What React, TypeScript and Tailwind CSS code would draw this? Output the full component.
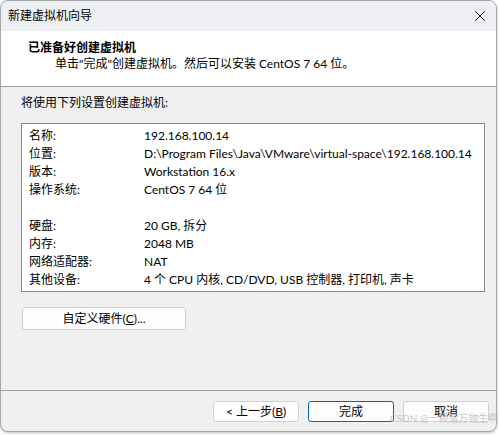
import React from "react";

const font = { fontFamily: 'Lato, "Noto Sans CJK SC", "Noto Sans", sans-serif' };

const rows1: [string, string][] = [
  ["名称:", "192.168.100.14"],
  ["位置:", "D:\\Program Files\\Java\\VMware\\virtual-space\\192.168.100.14"],
  ["版本:", "Workstation 16.x"],
  ["操作系统:", "CentOS 7 64 位"],
];
const rows2: [string, string][] = [
  ["硬盘:", "20 GB, 拆分"],
  ["内存:", "2048 MB"],
  ["网络适配器:", "NAT"],
  ["其他设备:", "4 个 CPU 内核, CD/DVD, USB 控制器, 打印机, 声卡"],
];

function Row({ k, v }: { k: string; v: string }) {
  return (
    <div className="flex h-[18px] items-center">
      <div className="w-[115px] shrink-0">{k}</div>
      <div className="whitespace-nowrap">{v}</div>
    </div>
  );
}

export default function App() {
  return (
    <div className="w-[499px] h-[435px] bg-white relative text-[12px] text-black leading-none" style={font}>
      <div className="w-[497px] h-[432px] flex flex-col rounded-[8px] border border-[#a8a8a8] overflow-hidden bg-[#f0f0f0] shadow-[0_1px_3px_rgba(0,0,0,0.25)]">
        {/* title bar */}
        <div className="h-[30px] shrink-0 bg-[#eef0f4] flex items-center justify-between pl-[7px] pr-[9px]">
          <span className="text-[12px]">新建虚拟机向导</span>
          <svg width="12" height="12" viewBox="0 0 12 12" className="mr-[1px]">
            <path d="M1 1 L11 11 M11 1 L1 11" stroke="#1a1a1a" strokeWidth="1" />
          </svg>
        </div>
        {/* header */}
        <div className="h-[56px] shrink-0 bg-white border-b border-[#a0a0a0] flex flex-col pl-[27px] pt-[9px]">
          <div className="font-bold h-[16px] flex items-center">已准备好创建虚拟机</div>
          <div className="pl-[27px] h-[16px] flex items-center">单击"完成"创建虚拟机。然后可以安装 CentOS 7 64 位。</div>
        </div>
        {/* body */}
        <div className="flex-1 flex flex-col pl-[20px] pr-[11px]">
          <div className="h-[16px] mt-[8px] flex items-center">将使用下列设置创建虚拟机:</div>
          <div className="mt-[12px] h-[169px] bg-white border border-[#828790] pl-[7px] pt-[3px]">
            {rows1.map(([k, v]) => (
              <Row key={k} k={k} v={v} />
            ))}
            <div className="h-[18px]" />
            {rows2.map(([k, v]) => (
              <Row key={k} k={k} v={v} />
            ))}
          </div>
          <div className="mt-[15px] ml-[1px]">
            <button className="w-[164px] h-[23px] rounded-[3px] border border-[#d0d0d0] bg-[#fdfdfd] flex items-center justify-center">
              自定义硬件(<span className="underline">C</span>)...
            </button>
          </div>
        </div>
        {/* footer */}
        <div className="h-[41px] shrink-0 border-t border-[#a0a0a0] flex justify-end items-start pt-[10px] pr-[7px] gap-[9px]">
          <button className="w-[86px] h-[21px] rounded-[3px] border border-[#d0d0d0] bg-[#fdfdfd] flex items-center justify-center">
            &lt; 上一步(<span className="underline">B</span>)
          </button>
          <button className="w-[86px] h-[21px] rounded-[3px] border border-[#0067c0] bg-[#fdfdfd] flex items-center justify-center">
            完成
          </button>
          <button className="w-[86px] h-[21px] rounded-[3px] border border-[#d0d0d0] bg-[#fdfdfd] flex items-center justify-center">
            取消
          </button>
        </div>
      </div>
      <div className="absolute left-[390px] top-[413px] text-[10px] text-[#bdbdbd] opacity-80 whitespace-nowrap">CSDN @一颗落万物生啊</div>
    </div>
  );
}
